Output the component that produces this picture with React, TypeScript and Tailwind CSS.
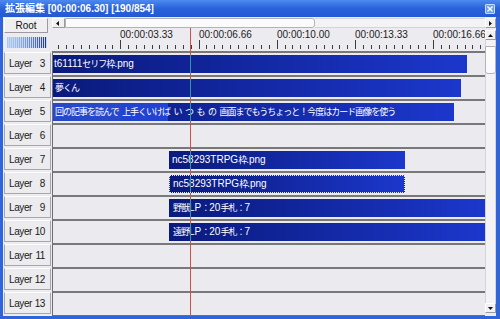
import React from 'react';

type Clip = {
  left: number;
  width: number;
  text: string;
  pad: number;
  selected?: boolean;
  highlight?: boolean;
};

const layers = [3, 4, 5, 6, 7, 8, 9, 10, 11, 12, 13];

const clips: Record<number, Clip> = {
  3: { left: 0, width: 414, text: 't61111セリフ枠.png', pad: 1 },
  4: { left: 0, width: 408, text: '夢くん', pad: 2 },
  5: {
    left: 0,
    width: 401,
    text: '回の記事を読んで\u2002上手くいけば\u2002い\u2002つ\u2002も\u2002の\u2002画面までもうちょっと！今度はカード画像を使う',
    pad: 2,
    highlight: true,
  },
  7: { left: 116, width: 236, text: 'nc58293TRPG枠.png', pad: 3 },
  8: { left: 116, width: 236, text: 'nc58293TRPG枠.png', pad: 3, selected: true },
  9: { left: 116, width: 316, text: '野獣LP：20手札：7', pad: 4 },
  10: { left: 116, width: 316, text: '遠野LP：20手札：7', pad: 4 },
};

// cursor position, relative to the track content (x = 53)
const CURSOR = 137;

// the old GUI font draws kana/kanji narrower than latin, so split the runs
function Runs({ text }: { text: string }) {
  const parts = text.split(/([\u2002\u3000-\u9fff\uff00-\uffef]+)/).filter(Boolean);
  return (
    <>
      {parts.map((p, i) =>
        /[\u2002\u3000-\u9fff\uff00-\uffef]/.test(p) ? (
          <span key={i} className="text-[9px] tracking-[-1px]">
            {p}
          </span>
        ) : (
          <span key={i}>{p}</span>
        ),
      )}
    </>
  );
}

function Arrow({ dir }: { dir: 'left' | 'right' | 'up' | 'down' }) {
  const pts = {
    left: '4,1 1,3.5 4,6',
    right: '2,1 5,3.5 2,6',
    up: '1,5 3.5,2 6,5',
    down: '1,2 3.5,5 6,2',
  }[dir];
  return (
    <svg width="7" height="7" viewBox="0 0 7 7">
      <polygon points={pts} fill="#111" />
    </svg>
  );
}

function ScrollButton({ dir, className }: { dir: 'left' | 'right' | 'up' | 'down'; className: string }) {
  return (
    <div
      className={`flex items-center justify-center bg-[#f1f0f3] border border-t-white border-l-white border-r-[#9c9aa0] border-b-[#9c9aa0] ${className}`}
    >
      <Arrow dir={dir} />
    </div>
  );
}

function TitleBar() {
  return (
    <div className="h-[17px] shrink-0 flex items-center justify-between pl-[5px] pr-[5px] bg-gradient-to-b from-[#4d8af0] via-[#2a62da] to-[#2459d4]">
      <span className="text-white font-bold text-[10px] leading-[12px] whitespace-nowrap">
        拡張編集 [00:00:06.30] [190/854]
      </span>
      <div className="w-[10px] h-[10px] mt-[1px] flex items-center justify-center bg-[#6a9ff0] border border-[#c8dcfa] rounded-[1px]">
        <svg width="6" height="6" viewBox="0 0 6 6">
          <path d="M0.5 0.5 L5.5 5.5 M5.5 0.5 L0.5 5.5" stroke="white" strokeWidth="1.4" />
        </svg>
      </div>
    </div>
  );
}

function Meter() {
  const stripes = Array.from({ length: 20 }, (_, i) => {
    const t = Math.pow(i / 19, 1.6);
    const c1 = [168, 200, 240];
    const c2 = [40, 56, 120];
    const col = c1.map((v, j) => Math.round(v + (c2[j] - v) * t));
    return `rgb(${col.join(',')})`;
  });
  return (
    <div className="flex w-[40px] h-[11px] mt-[4px] ml-[3px]">
      {stripes.map((c, i) => (
        <div key={i} className="flex w-[2px] h-full">
          <div className="w-[1px] h-full" style={{ background: c }} />
          <div className="w-[1px] h-full bg-[#c4d8f2]" />
        </div>
      ))}
    </div>
  );
}

function Ruler() {
  const ticks: { x: number; major: boolean }[] = [];
  for (let k = -8; k <= 47; k++) {
    const x = 68.3 + k * 7.825;
    if (x < 1 || x > 432) continue;
    ticks.push({ x: Math.round(x) + 0.5, major: (k + 100) % 10 === 0 });
  }
  const labels = ['00:00:03.33', '00:00:06.66', '00:00:10.00', '00:00:13.33', '00:00:16.66'];
  return (
    <div className="relative h-[23px] shrink-0">
      {labels.map((t, i) => (
        <span
          key={t}
          className="absolute top-[1px] text-[10px] leading-[11px] text-[#1c1c1c] whitespace-nowrap"
          style={{ left: Math.round(68.3 + i * 78.25) }}
        >
          {t}
        </span>
      ))}
      <svg className="absolute left-0 top-0" width="433" height="23">
        {ticks.map((t) => (
          <line key={t.x} x1={t.x} x2={t.x} y1={t.major ? 12 : 17} y2={21} stroke="#3c3c3c" strokeWidth="1" />
        ))}
      </svg>
    </div>
  );
}

function ClipBar({ clip }: { clip: Clip }) {
  return (
    <div
      className={`absolute z-10 top-[2px] h-[18px] flex items-center overflow-hidden bg-gradient-to-r from-[#0a1a7c] to-[#1c37cc] ${
        clip.selected ? 'border border-dotted border-[#e6e6f0]' : ''
      }`}
      style={{ left: clip.left, width: clip.width }}
    >
      {clip.highlight && (
        <>
          <div className="absolute left-0 top-0 h-full w-[68px] bg-[#2848cc]" />
          <div className="absolute left-[68px] top-0 h-full w-[47px] bg-[#2242d2]" />
        </>
      )}
      <span
        className="relative text-white text-[10px] leading-[11px] whitespace-nowrap"
        style={{ paddingLeft: clip.pad }}
      >
        <Runs text={clip.text} />
      </span>
      <div
        className="absolute top-0 h-full w-[1px] bg-[#2f9c9c]"
        style={{ left: CURSOR - clip.left - (clip.selected ? 1 : 0) }}
      />
    </div>
  );
}

export default function App() {
  return (
    <div className="w-[500px] h-[319px] flex flex-col bg-[#2f64da] overflow-hidden font-['Liberation_Sans','Noto_Sans_CJK_JP',sans-serif]">
      <TitleBar />
      <div className="flex-1 ml-[3px] mr-[4px] mb-[3px] bg-[#ecebef] grid grid-cols-[49px_433px_11px] grid-rows-[11px_23px_1fr]">
        {/* top left: root button + level meter */}
        <div className="row-span-2 flex flex-col items-start pt-[1px] pl-[1px]">
          <div className="w-[44px] h-[15px] flex items-center justify-center bg-[#efeef1] border border-t-white border-l-white border-r-[#9c9aa0] border-b-[#9c9aa0] text-[10px] leading-[12px] text-[#111]">
            Root
          </div>
          <Meter />
        </div>

        {/* horizontal scrollbar */}
        <div className="col-span-2 flex pt-[1px]">
          <ScrollButton dir="left" className="w-[13px] h-[10px]" />
          <div className="w-[250px] h-[10px] bg-[#fbfbfb] border border-[#b4b2b8] rounded-r-[3px]" />
          <div className="flex-1 h-[10px] bg-[#f3f2f5] border-y border-[#d6d4da]" />
          <ScrollButton dir="right" className="w-[11px] h-[10px]" />
        </div>

        {/* ruler + tracks */}
        <div className="row-span-2 relative overflow-hidden flex flex-col">
          <Ruler />
          <div className="flex-1 flex flex-col border-l border-[#6e6e6e] border-b border-b-[#6e6e6e]">
            {layers.map((n) => (
              <div key={n} className="relative h-[24px] shrink-0 border-t-2 border-[#787878] bg-[#ebeaee]">
                {clips[n] && <ClipBar clip={clips[n]} />}
              </div>
            ))}
          </div>
          <div className="absolute z-[5] top-0 bottom-0 left-[138px] w-[1px] bg-[#d05050]" />
        </div>

        {/* vertical scrollbar */}
        <div className="row-span-2 flex flex-col pt-[2px] pb-[3px]">
          <ScrollButton dir="up" className="w-[11px] h-[10px]" />
          <div className="relative flex-1 bg-[#f3f2f5] border-x border-[#d6d4da]">
            <div className="absolute left-[-1px] right-[-1px] top-[6px] h-[28px] bg-[#fbfbfb] border border-[#b4b2b8] rounded-b-[3px]" />
          </div>
          <ScrollButton dir="down" className="w-[11px] h-[10px]" />
        </div>

        {/* layer labels */}
        <div className="col-start-1 row-start-3 flex flex-col">
          {layers.map((n) => (
            <div key={n} className="h-[24px] shrink-0 pt-[1px] pl-[1px]">
              <div className="w-[47px] h-[22px] flex items-center justify-between pl-[4px] pr-[5px] bg-[#ecebee] border border-t-white border-l-[#a8a6ac] border-r-[#a8a6ac] border-b-[#a8a6ac] text-[10px] leading-[11px] tracking-[-0.4px] text-[#1a1a1a]">
                <span>Layer</span>
                <span>{n}</span>
              </div>
            </div>
          ))}
        </div>
      </div>
    </div>
  );
}
